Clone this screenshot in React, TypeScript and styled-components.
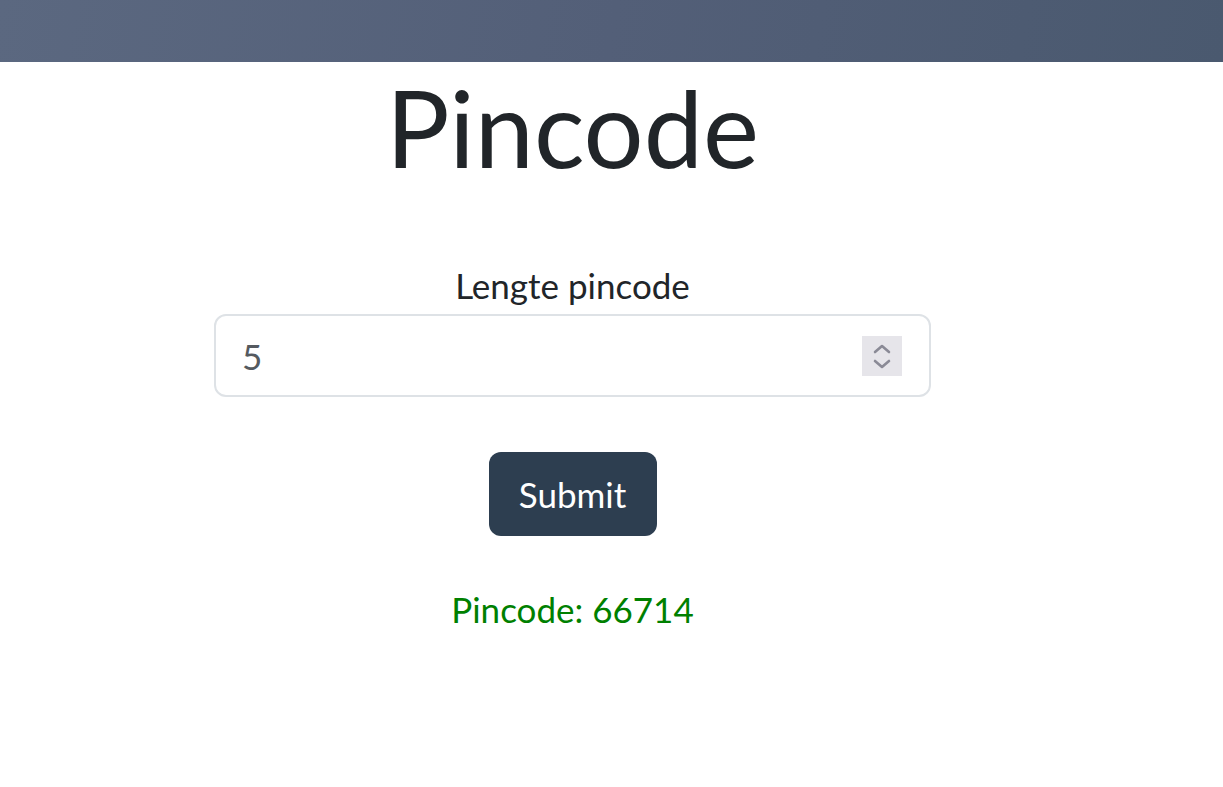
import React from "react";
import styled, { createGlobalStyle } from "styled-components";

const Global = createGlobalStyle`
  html, body { margin: 0; padding: 0; background: #fff; }
  body { font-family: Lato, "Open Sans", sans-serif; color: #212529; }
`;

const Header = styled.header`
  height: 62px;
  background: linear-gradient(100deg, #5b6880 0%, #535f78 50%, #4a596f 100%);
`;

const Layout = styled.main`
  display: grid;
  grid-template-columns: 214px 717px 1fr;
`;

const Column = styled.div`
  grid-column: 2;
  display: flex;
  flex-direction: column;
  align-items: center;
`;

const Title = styled.h1`
  margin: 2px 0 0;
  font-size: 106px;
  font-weight: 400;
  line-height: 1.2;
  color: #212529;
`;

const Form = styled.form`
  width: 100%;
  margin-top: 73px;
  display: flex;
  flex-direction: column;
  align-items: center;
`;

const Label = styled.label`
  font-size: 35px;
  line-height: 1.2;
  color: #212529;
  margin-bottom: 8px;
`;

const InputBox = styled.div`
  box-sizing: border-box;
  width: 100%;
  height: 83px;
  border: 2px solid #dee2e6;
  border-radius: 12px;
  display: flex;
  align-items: center;
  padding: 0 27px 0 26px;
`;

const Value = styled.span`
  flex: 1;
  font-size: 35px;
  color: #555a60;
`;

const Spinner = styled.div`
  width: 40px;
  height: 40px;
  background: #e6e5ea;
  display: flex;
  align-items: center;
  justify-content: center;
`;

const Button = styled.button`
  margin-top: 55px;
  width: 168px;
  height: 84px;
  border: none;
  border-radius: 12px;
  background: #2d3e50;
  color: #fff;
  font-family: Lato, sans-serif;
  font-size: 35px;
  cursor: pointer;
`;

const Result = styled.p`
  margin: 52px 0 0;
  font-size: 35px;
  color: #008000;
`;

export default function App() {
  return (
    <>
      <Global />
      <Header />
      <Layout>
        <Column>
          <Title>Pincode</Title>
          <Form onSubmit={(e) => e.preventDefault()}>
            <Label>Lengte pincode</Label>
            <InputBox>
              <Value>5</Value>
              <Spinner>
                <svg width="40" height="40" viewBox="0 0 40 40" fill="none" stroke="#8a8a96" strokeWidth="2.6" strokeLinecap="round" strokeLinejoin="round">
                  <path d="M13 16 L20 10 L27 16" />
                  <path d="M13 25 L20 31 L27 25" />
                </svg>
              </Spinner>
            </InputBox>
            <Button type="submit">Submit</Button>
          </Form>
          <Result>Pincode: 66714</Result>
        </Column>
      </Layout>
    </>
  );
}
